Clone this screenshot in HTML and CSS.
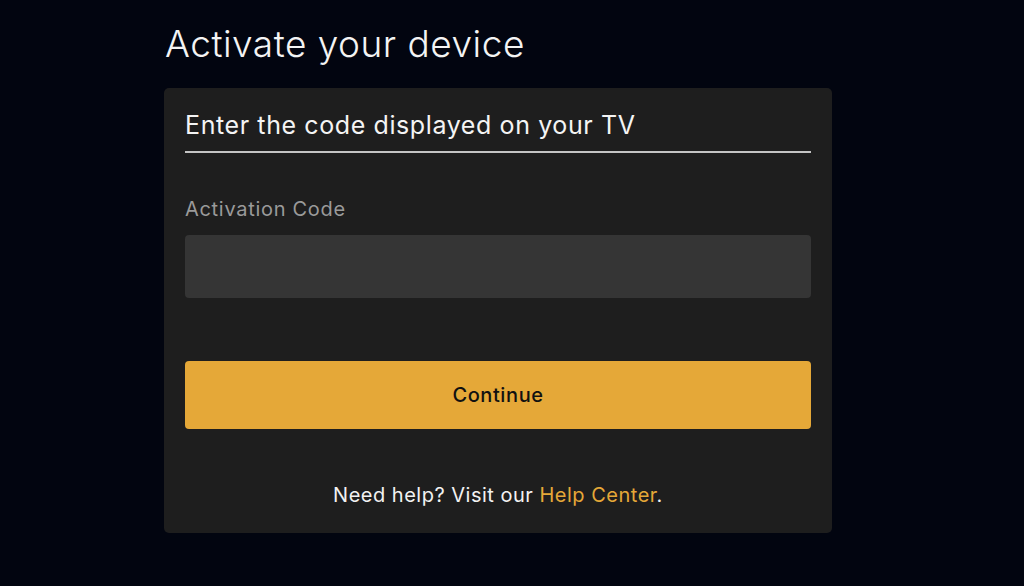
FILE: index.html
```html
<!DOCTYPE html>
<html lang="en">
<head>
<meta charset="utf-8">
<title>Activate your device</title>
<link rel="stylesheet" href="styles.css">
</head>
<body>
<main class="page">
  <h1 class="title">Activate your device</h1>
  <section class="card">
    <h2 class="card-heading">Enter the code displayed on your TV</h2>
    <label class="field-label" for="code">Activation Code</label>
    <input class="field-input" id="code" type="text">
    <button class="btn-continue" type="button">Continue</button>
    <p class="help">Need help? Visit our <a class="help-link" href="#">Help Center</a>.</p>
  </section>
</main>
</body>
</html>
```

FILE: styles.css
```css
html, body {
  margin: 0;
  padding: 0;
  background: #020510;
  height: 100%;
}
body {
  font-family: Inter, Roboto, "Liberation Sans", sans-serif;
  color: #f2f2f2;
}
.page {
  width: 668px;
  margin-left: 164px;
  padding-top: 20px;
}
.title {
  margin: 0 0 0 1px;
  font-size: 37px;
  font-weight: 300;
  line-height: 48px;
  letter-spacing: 0.5px;
  color: #f4f4f4;
}
.card {
  margin-top: 20px;
  background: #1e1e1e;
  border-radius: 5px;
  padding: 22px 21px 26px;
  display: flex;
  flex-direction: column;
}
.card-heading {
  margin: 0;
  font-size: 25px;
  font-weight: 400;
  line-height: 30px;
  letter-spacing: 0.6px;
  padding-bottom: 11px;
  border-bottom: 2px solid #c4c4c4;
  color: #f4f4f4;
}
.field-label {
  margin-top: 44px;
  font-size: 20px;
  line-height: 24px;
  letter-spacing: 0.7px;
  color: #9a9a9a;
}
.field-input {
  margin-top: 14px;
  height: 63px;
  box-sizing: border-box;
  border: none;
  border-radius: 4px;
  background: #353535;
  outline: none;
}
.btn-continue {
  margin-top: 63px;
  height: 68px;
  border: none;
  border-radius: 4px;
  background: #e5a838;
  color: #111;
  font-family: Inter, Roboto, "Liberation Sans", sans-serif;
  font-size: 20px;
  font-weight: 500;
  letter-spacing: 0.6px;
}
.help {
  margin: 54px 0 0;
  text-align: center;
  font-size: 20px;
  line-height: 24px;
  letter-spacing: 0.5px;
  color: #f2f2f2;
}
.help-link {
  color: #e5a838;
  text-decoration: none;
}
```
